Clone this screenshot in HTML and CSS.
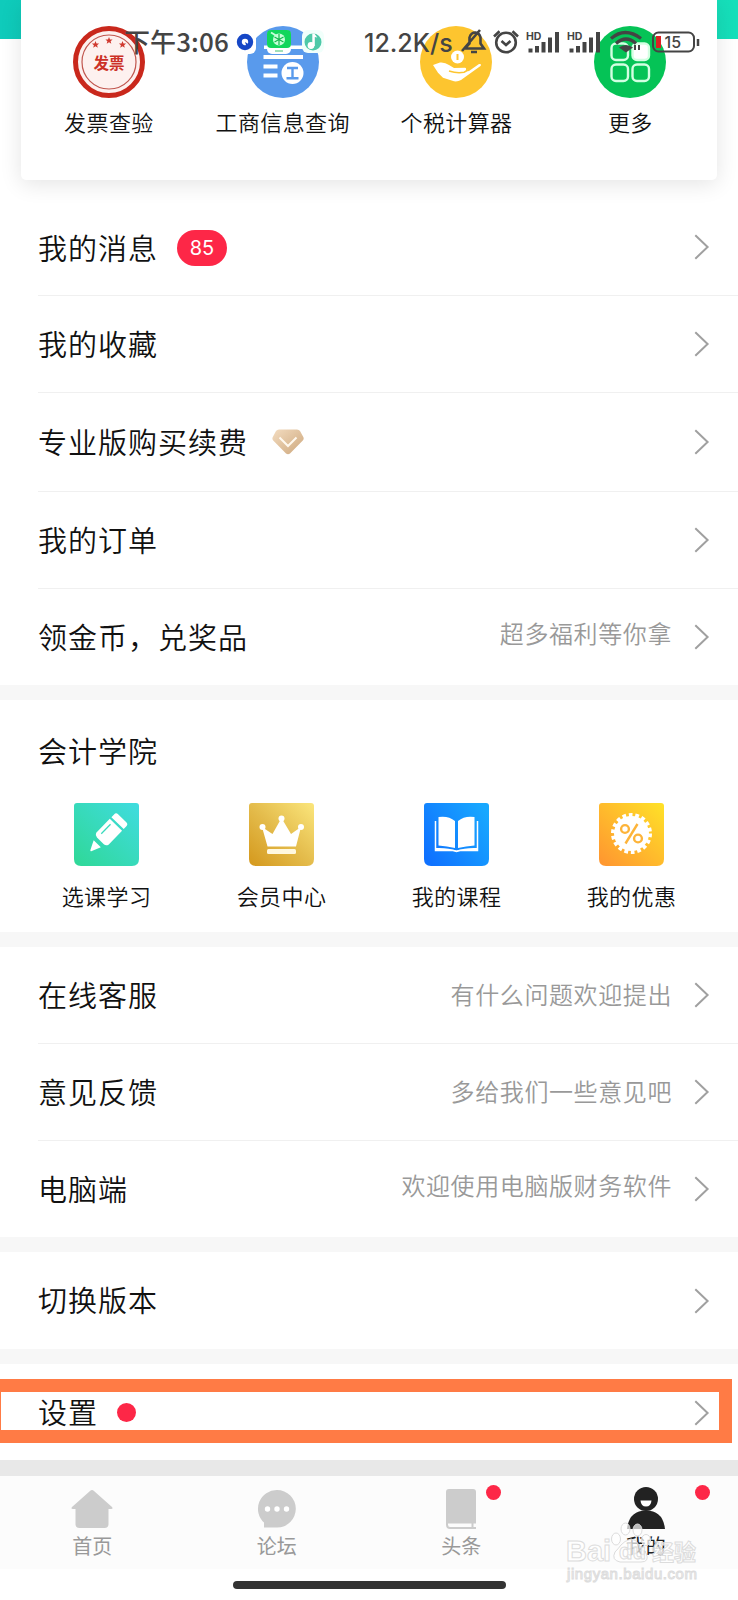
FILE: index.html
```html
<!DOCTYPE html>
<html lang="zh-CN">
<head>
<meta charset="utf-8">
<title>我的</title>
<link rel="stylesheet" href="styles.css">
</head>
<body>
<svg class="defs" width="0" height="0">
  <defs>
    <linearGradient id="g-teal" x1="0" y1="1" x2="1" y2="0"><stop offset="0" stop-color="#2fd896"/><stop offset="1" stop-color="#40dce0"/></linearGradient>
    <linearGradient id="g-gold" x1="0" y1="1" x2="1" y2="0"><stop offset="0" stop-color="#d4981c"/><stop offset=".5" stop-color="#e4bc4c"/><stop offset="1" stop-color="#fbe67c"/></linearGradient>
    <linearGradient id="g-blue" x1="0" y1=".8" x2="1" y2=".2"><stop offset="0" stop-color="#0f71ff"/><stop offset="1" stop-color="#18a8ff"/></linearGradient>
    <linearGradient id="g-orange" x1="0" y1="1" x2="1" y2="0"><stop offset="0" stop-color="#ff9430"/><stop offset="1" stop-color="#ffe228"/></linearGradient>
    <linearGradient id="g-gem" x1="0" y1="0" x2="1" y2="1"><stop offset="0" stop-color="#f3dcc0"/><stop offset="1" stop-color="#cda77c"/></linearGradient>
    <symbol id="chev" viewBox="0 0 16 26"><path d="M1.3 1.3 13.6 13 1.3 24.7" fill="none" stroke="#a0a0a0" stroke-width="2"/></symbol>
    <path id="tile" d="M3 0h59q3 0 3 3v53q0 7-7 7H7q-7 0-7-7V3q0-3 3-3z"/>
  </defs>
</svg>
<div class="screen">
  <header class="top">
    <div class="card">
      <div class="tool">
        <svg width="72" height="72" viewBox="0 0 72 72"><circle cx="36" cy="36" r="33.5" fill="#fdf1ef" stroke="#c9281c" stroke-width="5"/><circle cx="36" cy="36" r="27" fill="none" stroke="#c0564e" stroke-width="1.2"/>
          <g fill="#d0392f"><path id="star" d="m36 11 1 2.400 2.600.1-2 1.700.7 2.500-2.300-1.500-2.300 1.500.7-2.500-2-1.700 2.600-.1z"/><use href="#star" transform="translate(-13.5 4)"/><use href="#star" transform="translate(13.5 4)"/></g>
          <text class="stamp" x="36" y="42.500" text-anchor="middle">发票</text></svg>
        <span>发票查验</span>
      </div>
      <div class="tool">
        <svg width="72" height="72" viewBox="0 0 72 72"><circle cx="36" cy="36" r="36" fill="#599aec"/><g fill="#fff"><path d="M17 19.500h39v3.500H17zM16.500 29H56v4H16.500zM16.500 38.500h14v4h-14zM16.500 47.500h14v4h-14z"/><circle cx="45.500" cy="47" r="11"/></g><path d="M40 42h11M45.500 42v10M39.500 52.200h12" stroke="#599aec" stroke-width="2.400"/></svg>
        <span>工商信息查询</span>
      </div>
      <div class="tool">
        <svg width="72" height="72" viewBox="0 0 72 72"><circle cx="36" cy="36" r="36" fill="#fdc52f"/><circle cx="37.500" cy="31" r="6.500" fill="#fff"/><path d="M37.500 28v6" stroke="#fdc52f" stroke-width="2"/><path d="m13 39 7-2.500q5-.5 9 2.500l5 3 11-.3q3 1.200 2 2.800l-3 1.500 5-1 10-7q3-.5 1.500 2.100L41 54q-3 1.800-7 1.300l-11-3.500-5-5z" fill="#fff"/><path d="M29 45q8 2.500 15 1.200 4-1.500 2.500-4.500" fill="none" stroke="#fdc52f" stroke-width="1.500"/></svg>
        <span>个税计算器</span>
      </div>
      <div class="tool">
        <svg width="72" height="72" viewBox="0 0 72 72"><circle cx="36" cy="36" r="36" fill="#05c356"/><g fill="none" stroke="#d3ffe2" stroke-width="2.400"><rect x="17.500" y="17.500" width="16.500" height="16.500" rx="4.500"/><rect x="38.500" y="17.500" width="16.500" height="16.500" rx="4.500" fill="#fff"/><rect x="17.500" y="38.500" width="16.500" height="16.500" rx="4.500"/><rect x="38.500" y="38.500" width="16.500" height="16.500" rx="4.500"/></g></svg>
        <span>更多</span>
      </div>
    </div>
    <div class="status">
      <span class="time">下午3:06</span>
      <svg class="apps" width="88" height="26" viewBox="0 0 88 26">
        <rect width="20" height="25" rx="6" fill="#fff"/><circle cx="9" cy="13" r="5.700" fill="#fff" stroke="#1647c6" stroke-width="5"/><path d="m9 13 5 3-3 3z" fill="#1647c6"/>
        <rect x="31" y="1" width="24" height="24" rx="5" fill="#fff"/><rect x="31" y="1" width="24" height="18" rx="4" fill="#12d65b"/><circle cx="43" cy="10.500" r="6" fill="#c7ffd9"/><path d="M43 5v11M38.500 8l9 5M38.500 13l9-5" stroke="#15b94e" stroke-width="1.200"/><path d="m35 3.500 5 3" stroke="#c7ffd9" stroke-width="2"/><path d="M39 22h8" stroke="#96ddb0" stroke-width="1.800"/>
        <rect x="66" y="1" width="22" height="23" rx="6" fill="#f1fffb"/><circle cx="77" cy="13" r="8.500" fill="#4dc9a8"/><g fill="#fff"><circle cx="75" cy="16.500" r="3.400"/><path d="M76.300 4.500h2l3 4-2.500-.5v9h-2.500z"/></g>
      </svg>
      <span class="speed">12.2K/s</span>
      <svg class="sys" width="242" height="28" viewBox="0 0 242 28" fill="none" stroke="#444" stroke-width="2.600">
        <path d="M5 20.500h19l-3.500-5v-6q-1-4.500-5-5-4.500 0-6 5v6l-4.500 5M11 24h6M2 23 20 2"/>
        <circle cx="46" cy="14.500" r="9.800"/><path d="m41.500 13 4.500 4 4.500-4M34 8.500 39.500 3.300M52.500 3.300 58 8.500"/>
        <g id="sig"><g stroke-width="4"><path d="M70.500 24.500v-4M77 24.500v-6.500M83.500 24.500v-10.500M90 24.500v-15M97 24.500V4"/></g><text class="hd" x="66" y="11.500">HD</text></g><use href="#sig" x="41"/>
        <path d="M151 10.500q14-12 30 0M156 15.500q10-9 20 0" stroke-width="3.200"/><path d="M159 19.500q7-5 14 0l-7 5z" fill="#444" stroke="none"/><path d="M175 17v5M179 17v5" stroke-width="2"/>
        <rect x="193" y="4.500" width="41" height="19" rx="5.500" stroke-width="2"/><path d="M198.500 8v12" stroke="#d92323" stroke-width="5"/><path d="M238 11v7" stroke-width="2.500"/><text class="pct" x="204.500" y="20">15</text>
      </svg>
    </div>
  </header>

  <main>
    <section class="list first">
      <div class="row"><span>我的消息</span><b class="badge">85</b><svg class="chev"><use href="#chev"/></svg></div>
      <div class="row"><span>我的收藏</span><svg class="chev"><use href="#chev"/></svg></div>
      <div class="row tall"><span>专业版购买续费</span><svg class="gem" width="32" height="26" viewBox="0 0 32 26"><path d="M7 .5h18q2 0 3 1.500l3.300 6q1 2-.5 3.500L18 24.500q-2 1.500-4 0L1.200 11.500Q-.2 10 .8 8L4 2Q5 .5 7 .5z" fill="url(#g-gem)"/><path d="m7.500 8.500 8.500 8.500 8.500-8.500" fill="none" stroke="#fff8ee" stroke-width="2"/></svg><svg class="chev"><use href="#chev"/></svg></div>
      <div class="row"><span>我的订单</span><svg class="chev"><use href="#chev"/></svg></div>
      <div class="row short"><span>领金币，兑奖品</span><em class="raised">超多福利等你拿</em><svg class="chev"><use href="#chev"/></svg></div>
    </section>

    <section class="school">
      <h2>会计学院</h2>
      <div class="grid">
        <div class="course"><svg width="65" height="63" viewBox="0 0 65 63"><use href="#tile" fill="url(#g-teal)"/><g fill="#fff" transform="translate(33 31) rotate(44) scale(.95)"><path d="M-9-20q0-3 3-3H6q3 0 3 3v4H-9zM-9-13.500H9V7q-1 3-4 3H-5q-3 0-4-3zM-5.500 14.500H5L1 24q-1 2-2 0z"/><path d="M-4.500-10V4" stroke="#38dabc" stroke-width="1.300"/></g></svg><span>选课学习</span></div>
        <div class="course"><svg width="65" height="63" viewBox="0 0 65 63"><use href="#tile" fill="url(#g-gold)"/><g fill="#fff"><circle cx="13.500" cy="24" r="3"/><circle cx="32.500" cy="15.500" r="3"/><circle cx="52" cy="24" r="3"/><path d="m13 24 10.500 7L32.500 15l9.500 16L52 24l-5 19.500H18.500z"/><rect x="18" y="46" width="29" height="5" rx="1.500" fill="#fff8df"/></g></svg><span>会员中心</span></div>
        <div class="course"><svg width="65" height="63" viewBox="0 0 65 63"><use href="#tile" fill="url(#g-blue)"/><path d="M14.500 14q10-1.500 16.500 4v27q-8-2-16.500-2.500zM34 18q6.500-5.500 16.500-4v28.500q-8.500.5-16.500 2.500z" fill="#fff"/><path d="M11.500 18v29.500H29l3.500 1 3.500-1h17.500V18" fill="none" stroke="#fff" stroke-width="1.500"/><path d="M12 45q12-.5 20.500 2.500Q41 44.500 53 45v3H12z" fill="#fff"/></svg><span>我的课程</span></div>
        <div class="course"><svg width="65" height="63" viewBox="0 0 65 63"><use href="#tile" fill="url(#g-orange)"/><circle cx="32.500" cy="30.500" r="17.500" fill="#fff"/><circle cx="32.500" cy="30.500" r="18" fill="none" stroke="#fff" stroke-width="5" stroke-dasharray="3.600 2.683"/><g fill="none" stroke="#fdb43a" stroke-width="2.400"><circle cx="26" cy="26" r="3.900"/><circle cx="39" cy="35.500" r="3.900"/><path d="m38.500 21-12 19.500"/></g></svg><span>我的优惠</span></div>
      </div>
    </section>

    <section class="list">
      <div class="row"><span>在线客服</span><em>有什么问题欢迎提出</em><svg class="chev"><use href="#chev"/></svg></div>
      <div class="row"><span>意见反馈</span><em>多给我们一些意见吧</em><svg class="chev"><use href="#chev"/></svg></div>
      <div class="row short"><span>电脑端</span><em class="raised">欢迎使用电脑版财务软件</em><svg class="chev"><use href="#chev"/></svg></div>
    </section>
    <section class="list"><div class="row"><span>切换版本</span><svg class="chev"><use href="#chev"/></svg></div></section>
    <section class="list settings"><div class="row"><span>设置</span><i class="dot"></i><svg class="chev"><use href="#chev"/></svg></div><div class="highlight"></div></section>
  </main>

  <nav class="tabs">
    <div class="tab"><svg width="42" height="40" viewBox="0 0 42 40"><path d="M19 2q2-2 4 0l18 16q1.500 2-1 2h-2.500v15q0 4-4 4h-25q-4 0-4-4V20H2q-2.500 0-1-2z" fill="#ccc"/></svg><span>首页</span></div>
    <div class="tab"><svg width="40" height="40" viewBox="0 0 40 40"><path d="M20 1a18.800 18.800 0 1 1 0 37.600H7v-5A18.800 18.800 0 0 1 20 1z" fill="#ccc"/><g fill="#fff"><circle cx="10.500" cy="20" r="2.700"/><circle cx="20" cy="20" r="2.700"/><circle cx="29.500" cy="20" r="2.700"/></g></svg><span>论坛</span></div>
    <div class="tab"><svg width="32" height="40" viewBox="0 0 32 40"><path d="M4 0h24q3 0 3 3v31H1V3q0-3 3-3z" fill="#ccc"/><path d="M2 33v2.500q0 3.500 3 3.500h26M3 33.500h28M27.500 34v5" fill="none" stroke="#ccc" stroke-width="2"/></svg><span>头条</span><i class="dot"></i></div>
    <div class="tab active"><svg width="40" height="42" viewBox="0 0 40 42"><circle cx="20" cy="12" r="12" fill="#222"/><path d="M1 42Q3 23.500 20 23.500T39 42z" fill="#222"/><path d="M14.500 13.500h11q-.5 6-5.500 6t-5.500-6z" fill="#fff"/></svg><span>我的</span><i class="dot"></i></div>
    <svg class="watermark" width="136" height="66" viewBox="0 0 136 66">
      <g fill="#fff" fill-opacity=".7" stroke="#dcdcdc" stroke-width="1"><ellipse cx="50" cy="19" rx="4.500" ry="6"/><ellipse cx="59.500" cy="9" rx="4.500" ry="6"/><ellipse cx="71.500" cy="10" rx="4.500" ry="6"/><ellipse cx="80" cy="20" rx="4.500" ry="5.500"/><path d="M65 19q5 0 8 6t7 8q4 9-5 9H54q-9-2-5-10 3-3 6-7t10-6z"/>
      <text class="wm-big" x="0" y="41" textLength="45">Bai</text><text class="wm-du" x="53" y="39">du</text><text class="wm-cn" x="86" y="40">经验</text><text class="wm-url" x="1" y="59" textLength="130">jingyan.baidu.com</text></g>
    </svg>
  </nav>
  <footer class="home"><i></i></footer>
</div>
</body>
</html>
```
FILE: styles.css
```css
* { box-sizing: border-box; }
body {
  margin: 0;
  background: #fff;
  color: #111;
  font-family: "Noto Sans CJK SC", sans-serif;
}
svg { display: block; flex: none; }
.defs { position: absolute; }
.screen {
  width: 738px;
  height: 1600px;
  overflow: hidden;
  display: flex;
  flex-direction: column;
}

.top {
  position: relative;
  height: 199px;
  padding: 0 21px;
  background: linear-gradient(90deg, #0fcbbb, #16dfba) top / 100% 39px no-repeat;
}
.card {
  height: 180px;
  padding: 26px 0 0 1px;
  display: grid;
  grid-template-columns: repeat(4, 173.800px);
  background: #fff;
  border-radius: 0 0 5px 5px;
  box-shadow: 0 4px 22px rgba(0, 0, 0, .11);
}
.tool { display: flex; flex-direction: column; align-items: center; }
.tool span, .course span {
  font-size: 22px;
  line-height: 32px;
  letter-spacing: .4px;
  font-weight: 350;
  white-space: nowrap;
}
.tool span { margin-top: 7px; }
.stamp { font-size: 15.500px; font-weight: 700; fill: #cc3127; }

/* System bar drawn over the page header */
.status {
  position: absolute;
  inset: 26px 36px auto 124px;
  height: 32px;
  display: flex;
  align-items: center;
  color: #444;
  font-size: 26px;
  line-height: 32px;
  white-space: nowrap;
}
.time { width: 112px; margin-top: -2px; letter-spacing: .1px; font-weight: 500; }
.speed { width: 96px; margin: 2px 0 0 40px; font: 500 25px/32px Inter, sans-serif; }
.hd { font: 700 10.500px Inter, sans-serif; fill: #444; stroke: none; }
.pct { font: 500 16px Inter, sans-serif; fill: #444; stroke: none; }

.list { border-bottom: 15px solid #f7f7f7; }
.row {
  position: relative;
  height: 97px;
  display: flex;
  align-items: center;
  margin-left: 38px;
  padding-right: 28px;
  border-bottom: 1px solid #f0f0f0;
}
.row:last-child, .settings .row { border-bottom: 0; }
.row.tall { height: 99px; }
.row.short { height: 96px; }
.row span, h2 {
  font-size: 29px;
  line-height: 40px;
  letter-spacing: 1px;
  font-weight: 350;
}
.row span { margin-bottom: 3px; }
.first .row:first-child span { margin-bottom: 0; }
.badge {
  margin: 2px 0 0 19px;
  width: 50px;
  height: 36px;
  border-radius: 18px;
  background: #fd2747;
  color: #fff;
  font: 400 20px/36px Inter, sans-serif;
  text-align: center;
}
.gem { margin-left: 24px; }
.chev { width: 16px; height: 26px; margin-left: auto; }
.row em {
  margin: 0 0 3px auto;
  color: #999;
  font-size: 24px;
  font-style: normal;
  font-weight: 350;
  letter-spacing: .6px;
  line-height: 34px;
}
.row em.raised { margin-bottom: 9px; }
.row em + .chev { margin-left: 22px; }
.dot { width: 19px; height: 19px; border-radius: 50%; background: #fd2747; }
.row .dot { margin-left: 19px; }

.school { height: 247px; border-bottom: 15px solid #f7f7f7; }
h2 { margin: 0; padding: 30px 0 0 38px; }
.grid {
  display: grid;
  grid-template-columns: repeat(4, 175px);
  margin: 33px 0 0 19px;
}
.course { display: flex; flex-direction: column; align-items: center; gap: 13px; }

.settings { position: relative; height: 112px; border-bottom: 16px solid #e8e8e8; }
.highlight {
  position: absolute;
  top: 15px;
  left: -12px;
  width: 744px;
  height: 64px;
  border: 13px solid #ff7b45;
}

.tabs {
  position: relative;
  height: 93px;
  display: grid;
  grid-template-columns: repeat(4, 184.500px);
  background: #fcfcfc;
}
.tab {
  position: relative;
  display: flex;
  flex-direction: column;
  align-items: center;
  justify-content: flex-end;
  padding-bottom: 8px;
  color: #999;
  font-size: 20px;
  line-height: 30px;
}
.tab span { margin-top: 2px; }
.tab.active { color: #222; }
.tab .dot { position: absolute; left: 117px; top: 9px; width: 15px; height: 15px; }
.tab.active .dot { left: 141px; }
.watermark { position: absolute; left: 566px; top: 44px; overflow: visible; }
.wm-big { font: 700 29px "Liberation Sans", sans-serif; }
.wm-du { font: 700 22px "Liberation Sans", sans-serif; }
.wm-cn { font: 700 22px "Noto Sans CJK SC", sans-serif; }
.wm-url { font: 400 15px "Liberation Sans", sans-serif; }
.home { display: flex; justify-content: center; padding-top: 12px; }
.home i { width: 273px; height: 8px; border-radius: 4px; background: #333; }
```
